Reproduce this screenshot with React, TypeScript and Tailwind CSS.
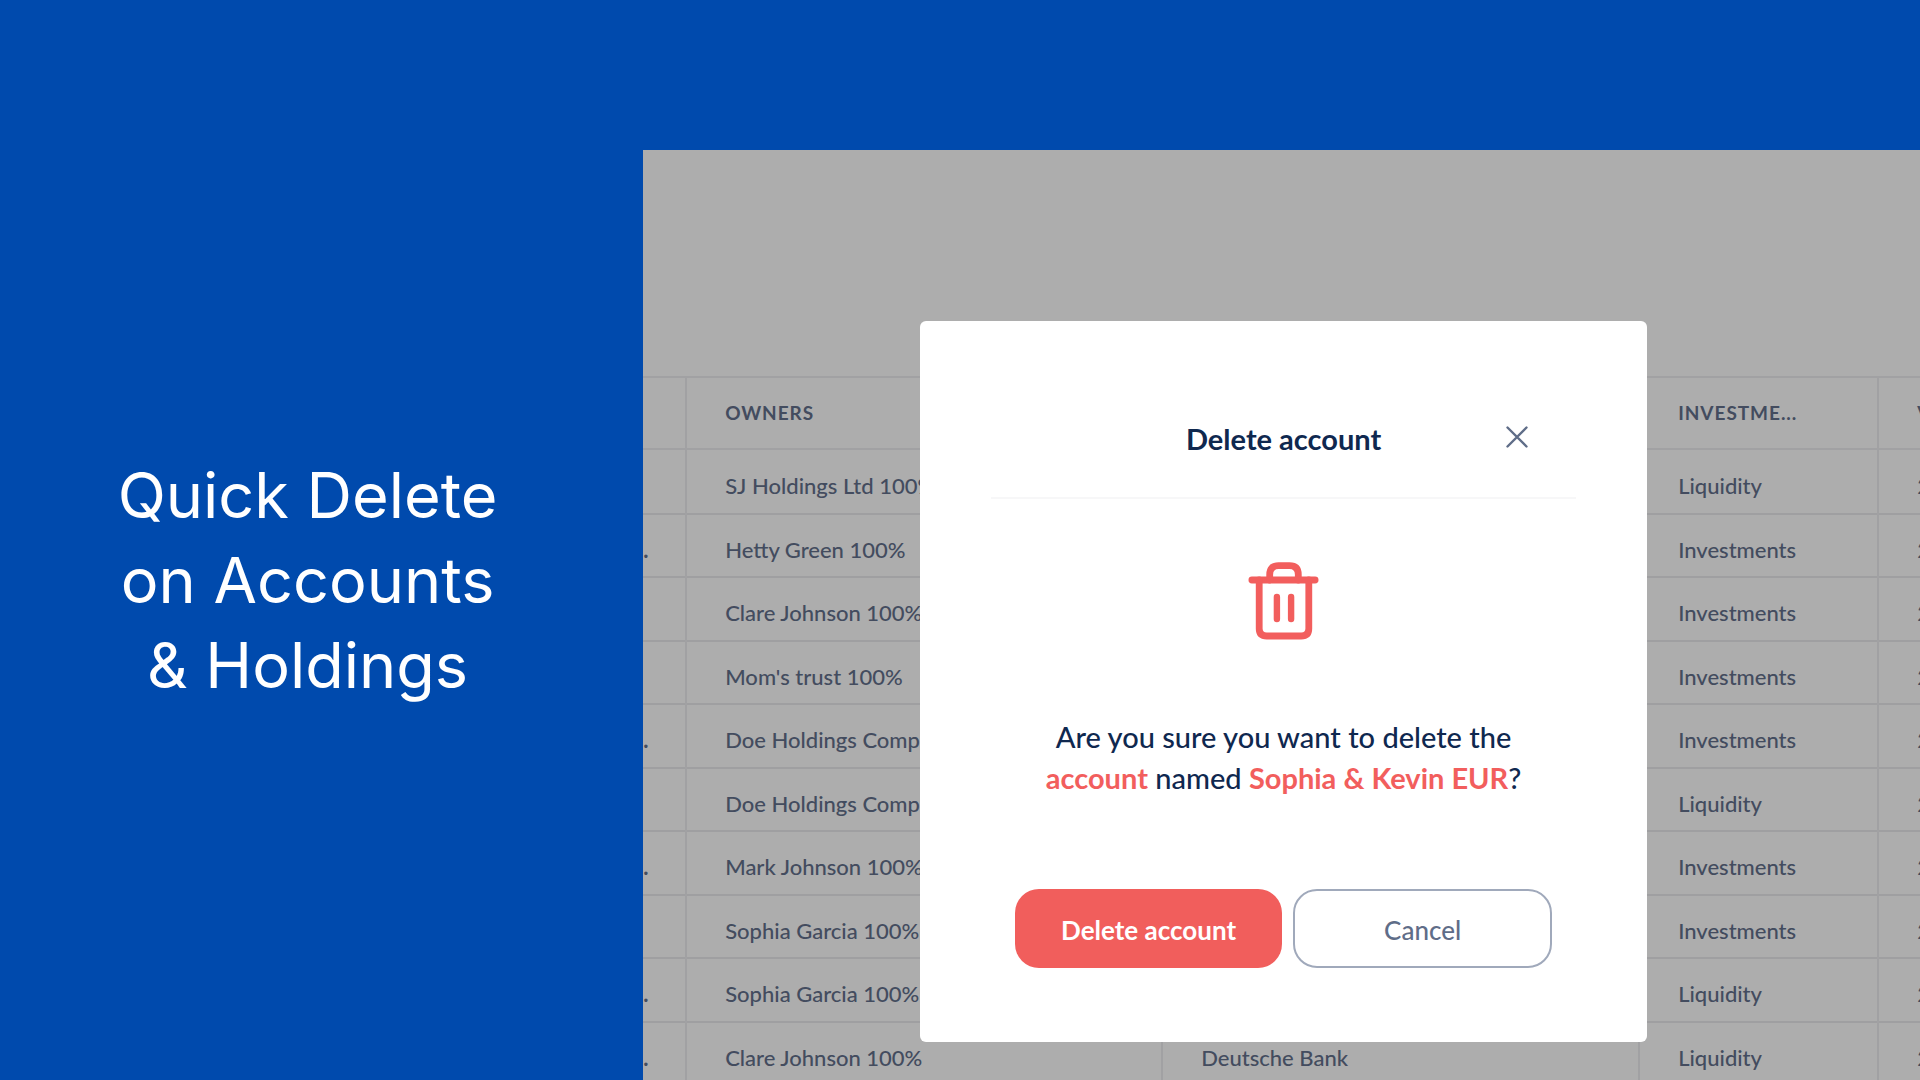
import React from "react";

type Row = {
  tail: string;
  owner: string;
  bank: string;
  type: string;
};

const ROWS: Row[] = [
  { tail: "", owner: "SJ Holdings Ltd 100%", bank: "", type: "Liquidity" },
  { tail: ".", owner: "Hetty Green 100%", bank: "", type: "Investments" },
  { tail: "", owner: "Clare Johnson 100%", bank: "", type: "Investments" },
  { tail: "", owner: "Mom's trust 100%", bank: "", type: "Investments" },
  { tail: ".", owner: "Doe Holdings Comp", bank: "", type: "Investments" },
  { tail: "", owner: "Doe Holdings Comp", bank: "", type: "Liquidity" },
  { tail: ".", owner: "Mark Johnson 100%", bank: "", type: "Investments" },
  { tail: "", owner: "Sophia Garcia 100%", bank: "", type: "Investments" },
  { tail: ".", owner: "Sophia Garcia 100%", bank: "", type: "Liquidity" },
  { tail: ".", owner: "Clare Johnson 100%", bank: "Deutsche Bank", type: "Liquidity" },
];

export default function App() {
  return (
    <main className="flex h-screen overflow-hidden bg-[#004aad] font-['Lato',sans-serif]">
      <section className="flex w-[33.5%] shrink-0 items-center justify-center pt-20 pr-7">
        <h1 className="text-center font-['Inter',sans-serif] text-[63px] leading-[85px] font-normal text-white">
          Quick Delete
          <br />
          on Accounts
          <br />
          &amp; Holdings
        </h1>
      </section>

      <section className="relative mt-[150px] min-w-0 flex-1 overflow-hidden bg-white">
        <AccountsTable />
        <div className="absolute inset-0 flex items-start justify-center bg-black/32 pt-[171px] pl-1">
          <DeleteDialog />
        </div>
      </section>
    </main>
  );
}

function AccountsTable() {
  return (
    <table className="mt-[226px] w-full table-fixed border-collapse text-left text-[22px] leading-7 font-medium whitespace-nowrap text-[#63708c]">
      <colgroup>
        <col className="w-[43px]" />
        <col className="w-[476px]" />
        <col className="w-[477px]" />
        <col className="w-[239px]" />
        <col />
      </colgroup>
      <thead>
        <tr className="h-[72px] border-y-2 border-[#eeeef0] text-[19px] tracking-wider">
          <HeadCell />
          <HeadCell>OWNERS</HeadCell>
          <HeadCell />
          <HeadCell>INVESTME...</HeadCell>
          <th className="pl-[38px] font-bold">V</th>
        </tr>
      </thead>
      <tbody>
        {ROWS.map((r, i) => (
          <tr key={i} className="h-16 border-b-2 border-[#eaebee] first:h-[65px] even:h-[63px]">
            <td className="border-r-2 border-[#eeeef0] pt-2 font-bold">{r.tail}</td>
            <Cell>{r.owner}</Cell>
            <Cell>{r.bank}</Cell>
            <Cell>{r.type}</Cell>
            <td className="pt-2 pl-[38px]">2</td>
          </tr>
        ))}
      </tbody>
    </table>
  );
}

function HeadCell({ children }: { children?: React.ReactNode }) {
  return <th className="border-r-2 border-[#eeeef0] pl-[38px] font-bold">{children}</th>;
}

function Cell({ children }: { children?: React.ReactNode }) {
  return <td className="border-r-2 border-[#eeeef0] pt-2 pl-[38px]">{children}</td>;
}

function DeleteDialog() {
  return (
    <div
      role="dialog"
      aria-modal="true"
      aria-labelledby="dialog-title"
      className="w-[727px] rounded-md bg-white px-[71px] pt-[93px] pb-[74px] text-[#0f284f]"
    >
      <header className="relative border-b-2 border-[#f7f7f8] pb-[33px] text-center">
        <h2 id="dialog-title" className="text-[29px] leading-[50px] font-bold">
          Delete account
        </h2>
        <button type="button" aria-label="Close" className="absolute top-1 right-10 p-2">
          <CloseIcon />
        </button>
      </header>

      <div className="mt-[63px] flex justify-center">
        <TrashIcon />
      </div>

      <p className="mt-[76px] text-center text-[29px] leading-[41px] font-medium">
        Are you sure you want to delete the
        <br />
        <span className="font-bold text-[#f25e5d]">account</span> named{" "}
        <span className="font-bold text-[#f25e5d]">Sophia &amp; Kevin EUR</span>?
      </p>

      <div className="mt-[91px] flex gap-[11px] px-6">
        <button
          type="button"
          className="h-[79px] w-[267px] rounded-3xl bg-[#f15e5c] pt-1 text-[26px] font-bold text-white"
        >
          Delete account
        </button>
        <button
          type="button"
          className="h-[79px] w-[259px] rounded-3xl border-2 border-[#a0a9bb] pt-1 text-[26px] font-medium text-[#5f6d88]"
        >
          Cancel
        </button>
      </div>
    </div>
  );
}

function CloseIcon() {
  return (
    <svg width="22" height="22" viewBox="0 0 22 22" fill="none" stroke="#5f6d88" strokeWidth="2.4" strokeLinecap="round">
      <path d="M1.5 1.5 20.5 20.5M20.5 1.5 1.5 20.5" />
    </svg>
  );
}

function TrashIcon() {
  return (
    <svg width="72" height="78" viewBox="0 0 72 78" fill="none" stroke="#f25e5d" strokeWidth="6.8" strokeLinecap="round">
      <path d="M3.9 18H67.1" />
      <path d="M21.7 18V12.5Q21.7 3.6 30.5 3.6H41.5Q50.3 3.6 50.3 12.5V18" />
      <path d="M11.2 18V66.5Q11.2 74 18.7 74H53.3Q60.8 74 60.8 66.5V18" />
      <path d="M28.9 35V57M43.1 35V57" strokeWidth="6.4" />
    </svg>
  );
}
